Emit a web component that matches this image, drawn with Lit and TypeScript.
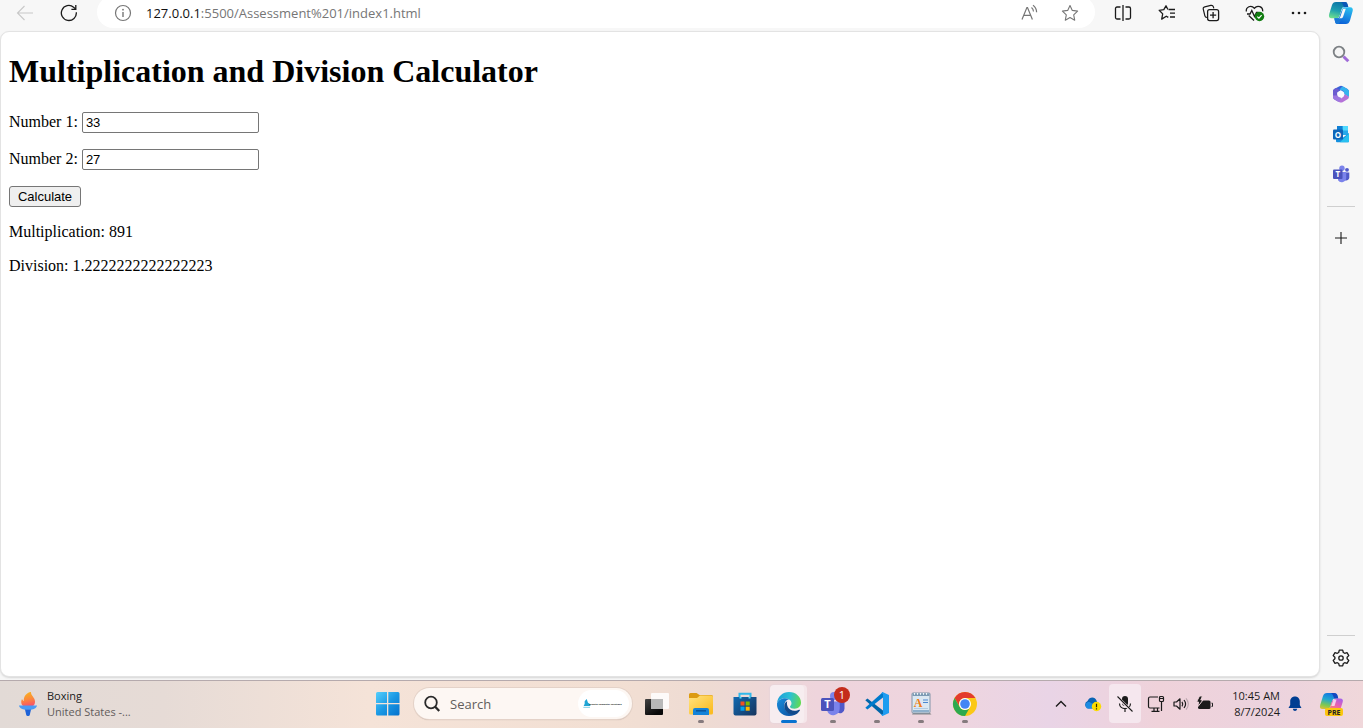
import { LitElement, html, css, svg } from "lit";
import { customElement, state } from "lit/decorators.js";

const icon = (w: number, h: number, body: unknown) =>
  html`<svg width=${w} height=${h} viewBox="0 0 ${w} ${h}" fill="none" aria-hidden="true">${body}</svg>`;

const line = "#1b1b1b";
const grey = "#767676";

const icons = {
  back: icon(18, 18, svg`<path d="M17 9H1.5M8.500 2L1.500 9l7 7" stroke="#c8c8c8" stroke-width="1.100"/>`),
  reload: icon(18, 18, svg`<path d="M16.300 8.200A7.500 7.500 0 1 1 13.600 3.200L15.600 5" stroke=${line} stroke-width="1.300"/><path d="M15.800 1v4.400h-4.400" stroke=${line} stroke-width="1.300"/>`),
  info: icon(18, 18, svg`<circle cx="9" cy="9" r="7.500" stroke=${grey} stroke-width="1.200"/><path d="M9 8v5" stroke=${grey} stroke-width="1.400"/><circle cx="9" cy="5.700" r=".9" fill=${grey}/>`),
  read: icon(18, 18, svg`<path d="M1 15.500L5.900 3.500h.6l4.900 12M2.800 11.300h6.800" stroke=${grey} stroke-width="1.200"/><path d="M10.500 3.500c1.200.9 1.900 2.200 2 4M12 1.200c2.200 1.500 3.500 3.800 3.600 7" stroke=${grey} stroke-width="1.200"/>`),
  star: icon(18, 18, svg`<path d="M9 1.500l2.300 4.900 5.300.7-3.900 3.700 1 5.400L9 13.600l-4.700 2.600 1-5.400L1.400 7.100l5.300-.7z" stroke=${grey} stroke-width="1.100" stroke-linejoin="round"/>`),
  split: icon(18, 18, svg`<path d="M6.500 3H3a1.500 1.500 0 0 0-1.500 1.500v9A1.500 1.500 0 0 0 3 15h3.500M11.500 3H15a1.500 1.500 0 0 1 1.500 1.500v9A1.500 1.500 0 0 1 15 15h-3.500M9 1v16" stroke=${line} stroke-width="1.300"/>`),
  favourites: icon(18, 18, svg`<path d="M10.600 5.500h6.400M12 9.200h5M12 13h5M10.300 13.400l-2-1.200-4.600 2.900 1-5.200L1.200 6.300l4.600-.7L8 1.800l1.900 3.700" stroke=${line} stroke-width="1.300" stroke-linejoin="round"/>`),
  collections: icon(18, 18, svg`<path d="M5 13.500c-1.500 0-2-.7-2.200-1.800L1.300 5.300c-.3-1.300.2-2.200 1.500-2.500l6-1.400c1.300-.3 2.200.2 2.600 1.500l.4 1.400" stroke=${line} stroke-width="1.200"/><rect x="5.600" y="5.600" width="11" height="11" rx="2" stroke=${line} stroke-width="1.300"/><path d="M11.100 8v6.200M8 11.100h6.200" stroke=${line} stroke-width="1.300"/>`),
  health: icon(20, 18, svg`<path d="M1.300 7.500C.8 3 6 .5 9.400 4.200 12.600.5 18 2.800 17.700 7.400M2 10h3l1.800-3.500 2.700 6 2-4h2M3.700 11.500l5.300 5" stroke=${line} stroke-width="1.300"/><circle cx="14.500" cy="12.500" r="4.700" fill="#107c10"/><path d="M12.300 12.600l1.600 1.500 2.700-2.900" stroke="#fff" stroke-width="1.200"/>`),
  more: icon(18, 18, svg`<g fill=${line}><circle cx="3" cy="9" r="1.300"/><circle cx="9" cy="9" r="1.300"/><circle cx="15" cy="9" r="1.300"/></g>`),
  copilot: icon(26, 24, svg`
    <defs><linearGradient id="ca" x1="8" y1="1" x2="4" y2="17" gradientUnits="userSpaceOnUse"><stop stop-color="#0c78a8"/><stop offset=".5" stop-color="#1e9fb0"/><stop offset="1" stop-color="#6fe08c"/></linearGradient>
    <linearGradient id="cb" x1="20" y1="6" x2="15" y2="23" gradientUnits="userSpaceOnUse"><stop stop-color="#2bc0f0"/><stop offset="1" stop-color="#0b62d8"/></linearGradient></defs>
    <path d="M8 1h9c1.500 0 2 .8 2.400 2l.9 3h-4c-1.500 0-2.200.8-2.600 2l-2 6.500C11 17 10 17.300 8 17.300H3.500C1 17.300.5 15.500 1.200 13L4 4c.7-2 1.800-3 4-3z" fill="url(#ca)"/>
    <path d="M13 1h4c1.500 0 2 .8 2.400 2l.9 3h-4L15 4c-.4-1.500-.9-2.600-2-3z" fill="#0a58b8"/>
    <path d="M17 6.300h5c2.600 0 3.300 1.800 2.600 4L22 19.500c-.8 2.500-2 3.500-4.200 3.500H9.500c-1.500 0-2-1-2.400-2.300L6.300 17.300H9c1.700 0 2.400-.7 2.900-2.300l2.300-7c.5-1.300 1.300-1.700 2.800-1.700z" fill="url(#cb)"/>
    <path d="M6.300 17.300H9c1.700 0 2.400-.7 2.900-2.300l1.300-4.200L16 9l-2.700 9c-.6 2-1.600 4-2.800 5h-1c-1.500 0-2-1-2.400-2.300z" fill="#1878d8"/>
    <path d="M15 7.800h2.800L15 16c-.4 1-1 1.300-2 1.300h-2.500c1 0 1.600-.7 2-2z" fill="#f7f7f7"/>`),
  find: icon(18, 18, svg`<path d="M11.500 11.500l4.800 4.800" stroke="#a06bd8" stroke-width="3"/><circle cx="7" cy="7" r="5.300" fill="#f5f5f5" stroke="#7c8084" stroke-width="1.800"/>`),
  m365: icon(18, 18, svg`
    <path d="M7.500 1.200Q9 .3 10.500 1.200L15.500 4Q17 5 17 6.500V11l-4-1.500L9 5 5 7.500 1 8V6Q1 4.800 2.200 4z" fill="#3a62d8"/>
    <path d="M10.500 1.200l5 2.800Q17 5 17 6.500V12l-4.500-2.500L11.500 6 7.500 4.500z" fill="#35b2ee"/>
    <path d="M1 6.200V12.300Q1 13.500 2.200 14.200L6 16.500l3-3.500-3.500-1.500-.5-4L8 5 4 3 2.200 4Q1 4.800 1 6.200z" fill="#6c5cd0"/>
    <path d="M3.500 15l4 2.200q1.500.8 3 0l5-2.900q1.500-.9 1.500-2.500L12.500 9 10 13l-3.500 2z" fill="#b572d8"/>
    <path d="M1 10.500v2Q1 13.700 2.200 14.400L7 17l2.500-4L5 10.500z" fill="#9d78e0"/>
    <circle cx="9" cy="9.200" r="3.300" fill="#fafaff"/>`),
  outlook: icon(18, 18, svg`<rect x="5" y="1" width="11" height="9" fill="#28a8ea"/><path d="M10.500 1H16v4.500h-5.500z" fill="#50d9ff"/><path d="M5 1h5.500v4.500H5z" fill="#0f7fd4"/><path d="M4 9l6.500 4L17 8v8.500a.8.800 0 0 1-.8.800H5a1 1 0 0 1-1-1z" fill="#1490df"/><path d="M17 8.200L8 17.300h8.200c.5 0 .8-.3.8-.8z" fill="#28c0f0"/><rect x="1" y="4.500" width="10" height="10" rx="1" fill="#0d64b8"/><text x="6" y="12.700" text-anchor="middle" class="mark">O</text>`),
  teams: icon(18, 18, svg`<circle cx="15" cy="4.800" r="1.900" fill="#5059c9"/><circle cx="10" cy="3.200" r="2.700" fill="#7b83eb"/><path d="M13 7.500h4.300v5a3.100 3.100 0 0 1-4.300 2.700z" fill="#5059c9"/><path d="M6 7h8.200v5.600a4.500 4.500 0 0 1-8.200 2.700z" fill="#7b83eb"/><rect x="1" y="4.500" width="9.500" height="9.500" rx="1" fill="#4b53bc"/><text x="5.700" y="12.200" text-anchor="middle" class="mark">T</text>`),
  plus: icon(18, 18, svg`<path d="M9 3v12M3 9h12" stroke=${line} stroke-width="1.100"/>`),
  gear: icon(18, 18, svg`<path d="M7.300 1.200h3.400l.6 2.300 1.400.8 2.300-.7 1.800 3-1.700 1.600v1.600l1.700 1.600-1.800 3-2.300-.7-1.400.8-.6 2.300H7.300l-.6-2.300-1.400-.8-2.300.7-1.800-3 1.700-1.600V8.200L1.200 6.600l1.800-3 2.300.7 1.400-.8z" stroke=${line} stroke-width="1.300" stroke-linejoin="round"/><circle cx="9" cy="9" r="2.200" stroke=${line} stroke-width="1.300"/>`),
  torch: icon(18, 24, svg`<defs><linearGradient id="fl" x1="8" y1="0" x2="11" y2="14" gradientUnits="userSpaceOnUse"><stop stop-color="#f9b21c"/><stop offset=".5" stop-color="#fb8a3c"/><stop offset="1" stop-color="#f8506a"/></linearGradient></defs><path d="M12 0c-.3 3.500 4 5.500 4 9.500 0 2-.7 3.500-2 4.500H4C2.300 12.500 1.500 9.500 3 7c.5 1.200 1 1.800 1.800 2C4.500 4.500 7.500.5 12 0z" fill="url(#fl)"/><path d="M0 13.500h18c-.5 3-3.500 3.700-6 4.200H6c-2.500-.5-5.500-1.200-6-4.200z" fill="#4a9bf5"/><path d="M6 17.500h6l-1.300 5.700c-.3 1-3 1-3.400 0z" fill="#1c62d8"/>`),
  windows: icon(24, 24, svg`<defs><linearGradient id="wn" x1="0" y1="0" x2="24" y2="24" gradientUnits="userSpaceOnUse"><stop stop-color="#55cffc"/><stop offset=".5" stop-color="#1a98e4"/><stop offset="1" stop-color="#0470cc"/></linearGradient></defs><path d="M1.500 0H11v11H0V1.500Q0 0 1.500 0zM12.300 0h9.700q1.500 0 1.500 1.500V11H12.300zM0 12.300h11v11.200H1.500Q0 23.500 0 22zM12.300 12.300h11.200V22q0 1.500-1.500 1.500h-9.700z" fill="url(#wn)"/>`),
  lens: icon(18, 18, svg`<circle cx="8" cy="7.500" r="5.800" stroke="#2a2a2a" stroke-width="1.800"/><path d="M12.200 11.800l4 4.200" stroke="#2a2a2a" stroke-width="2.300"/>`),
  view: icon(26, 24, svg`<defs><linearGradient id="tv" x1="0" y1="7" x2="10" y2="23" gradientUnits="userSpaceOnUse"><stop stop-color="#444"/><stop offset="1" stop-color="#090909"/></linearGradient></defs><rect x="1" y="7" width="18" height="16" rx="1" fill="url(#tv)"/><rect x="7" y="1" width="18" height="16" rx="1" fill="#fff" fill-opacity=".85"/><path d="M7 7h12v10H7z" fill="#b8b8b8"/>`),
  folder: icon(26, 24, svg`<defs><linearGradient id="fd" x1="4" y1="5" x2="18" y2="24" gradientUnits="userSpaceOnUse"><stop stop-color="#ffdf76"/><stop offset="1" stop-color="#fbbc22"/></linearGradient></defs><path d="M1 2.500Q1 1 2.500 1h6L11.500 3H23.500Q25 3 25 4.500V10H1z" fill="#dc9b12"/><path d="M1 6h8l3-2.500h11.500Q25 3.500 25 5v16q0 1.500-1.500 1.500h-21Q1 22.500 1 21z" fill="url(#fd)"/><path d="M5 23v-5q0-2 2-2h12q2 0 2 2v5z" fill="#1583d8"/><path d="M8 18.800h10" stroke="#0a559c" stroke-width="1.500"/>`),
  store: icon(24, 24, svg`<defs><linearGradient id="st" x1="3" y1="5" x2="22" y2="23" gradientUnits="userSpaceOnUse"><stop stop-color="#1166ac"/><stop offset="1" stop-color="#173761"/></linearGradient></defs><path d="M6.500 7V1.800h11V7" stroke="#30b8ea" stroke-width="2"/><path d="M.5 5h23v16.500q0 2-2 2h-19q-2 0-2-2z" fill="url(#st)"/><path d="M6.500 5h2v1.500h-2zM15.500 5h2v1.500h-2z" fill="#55ddf8"/><path d="M7.500 9.500h4v4h-4z" fill="#f25022"/><path d="M12.700 9.500h4v4h-4z" fill="#7fba00"/><path d="M7.500 14.700h4v4h-4z" fill="#00a4ef"/><path d="M12.700 14.700h4v4h-4z" fill="#ffb900"/>`),
  edge: icon(26, 26, svg`
    <defs><linearGradient id="ea" x1="2" y1="5" x2="25" y2="10" gradientUnits="userSpaceOnUse"><stop stop-color="#1fa0d8"/><stop offset=".5" stop-color="#2cc0d4"/><stop offset="1" stop-color="#61da50"/></linearGradient>
    <linearGradient id="eb" x1="2" y1="10" x2="18" y2="25" gradientUnits="userSpaceOnUse"><stop stop-color="#1787d6"/><stop offset="1" stop-color="#0c4f9e"/></linearGradient></defs>
    <path d="M1 12.500C1.500 5.500 6.700 1 13 1c7 0 12 5 12 10.500 0 4-3 6.200-6.300 6.200-3 0-4.700-1-4.700-2 0-.8 1.500-1.300 1.500-3.400C15.500 9.500 12.800 7.200 9 7.200c-4.500 0-7 2.500-8 5.300z" fill="url(#ea)"/>
    <path d="M1 12.500c1-3 4-5.300 8-5.300 1.500 0 2.800.3 4 1-3 .6-4.700 3.300-4.700 6.300C8.300 19 12 23 17 23c1.500 0 3.500-.5 5.500-1.700C20.300 23.800 17 25 13 25 5.500 25 .6 19 1 12.500z" fill="url(#eb)"/>
    <path d="M11.200 10.200C10 14 12.500 19.700 18.500 19.700c2 0 3.500-.6 4.700-1 .6-.2 1 .3.500 1C22 22.500 19.300 23.500 17 23.500c-6 0-9-5-8.700-8.800.1-2 1.300-3.700 2.900-4.500z" fill="#114a8b"/>`),
  teamsBig: icon(26, 26, svg`<circle cx="21" cy="7" r="2.800" fill="#5059c9"/><circle cx="14" cy="5" r="4" fill="#7b83eb"/><path d="M17 10.500h7.500v7.300a4.500 4.500 0 0 1-7 3.700z" fill="#5059c9"/><path d="M7.500 10.500h12.200v7.300a6.500 6.500 0 0 1-12.200 3z" fill="#7b83eb"/><rect x="1" y="7" width="13" height="13" rx="1.500" fill="#4b53bc"/><text x="7.500" y="17.300" text-anchor="middle" class="mark big">T</text>`),
  code: icon(26, 26, svg`<path d="M1.300 9.300L3.400 7.600 19 19.500V25L1.300 9.300z" fill="#0065a9"/><path d="M1.300 16.800l2.100 1.600L19 6.500V1L1.300 16.800z" fill="#007acc"/><path d="M18.500 1L25 4v18l-6.500 3-1.500-1.500 2-.5V3l-2-.5z" fill="#1f9cf0"/>`),
  notes: icon(22, 24, svg`<path d="M3 21l17 0 1.500 1.500H2z" fill="#888"/><rect x="2" y="1" width="18" height="20" rx="1" fill="#dbe7f2" stroke="#8194a8" stroke-width="1"/><path d="M2.500 1.500h17v2.500h-17z" fill="#7d9ab4"/><path d="M4.500 1v1.800M7.500 1v1.800M10.500 1v1.800M13.500 1v1.800M16.500 1v1.800" stroke="#f3f6f8" stroke-width="1"/><path d="M13 8h5M13 10.500h5" stroke="#4c87d0" stroke-width="1"/><path d="M4 16.500h14" stroke="#b4cbe0" stroke-width="1"/><path d="M3 19h16" stroke="#8fb0cc" stroke-width="2"/><text x="8" y="14.500" text-anchor="middle" class="letter">A</text>`),
  chrome: icon(26, 26, svg`<circle cx="13" cy="13" r="12" fill="#fbc816"/><path d="M2.600 7A12 12 0 0 1 23.400 7H13a6 6 0 0 0-5.400 8.500z" fill="#e33b2e"/><path d="M2.600 7A12 12 0 0 0 13 25l5.300-9.200A6 6 0 0 1 7.700 16z" fill="#2da94f"/><circle cx="13" cy="13" r="6" fill="#fff"/><circle cx="13" cy="13" r="4.800" fill="#4285f4"/>`),
  chevron: icon(12, 12, svg`<path d="M1 8.500l5-5 5 5" stroke=${line} stroke-width="1.400"/>`),
  cloud: icon(18, 16, svg`<path d="M4 12.500a4 4 0 0 1-.5-7.500C5.500.5 11 .5 12.500 4.500L14 8l-3 4.500z" fill="#0a64b4"/><path d="M2 11c-1.500-3 .7-5.500 3.500-5L12 10l-1 2.500H4c-1 0-1.500-.5-2-1.500z" fill="#1c8be2"/><circle cx="12.500" cy="10.500" r="4.700" fill="#fbdc00"/><path d="M12.500 7.800v3.500M12.500 12.300v1.200" stroke="#322d00" stroke-width="1.200"/>`),
  mic: icon(18, 18, svg`<rect x="6" y="1" width="6" height="10" rx="3" fill="#1b1b1b"/><path d="M3.500 8.500c0 6.700 11 6.700 11 0M9 13.500V17" stroke=${line} stroke-width="1.200"/><path d="M1.500 2L16 16.500" stroke="#f5e7ee" stroke-width="2.600"/><path d="M1.500 1.500L16.500 16.500" stroke=${line} stroke-width="1.100"/>`),
  monitor: icon(18, 18, svg`<path d="M11 2H3A1.500 1.500 0 0 0 1.500 3.500v8A1.500 1.500 0 0 0 3 13h9.500M4.500 16.300h8M7 13v3M10.500 13v3" stroke=${line} stroke-width="1.200"/><rect x="12.500" y="1.500" width="4" height="5" rx="1" stroke=${line} stroke-width="1.200"/><path d="M12.500 3.500h4M14.500 6.500v9.500" stroke=${line} stroke-width="1.200"/>`),
  sound: icon(16, 16, svg`<path d="M1 6h2.500L7 2.800v10.400L3.500 10H1z" stroke=${line} stroke-width="1.200" stroke-linejoin="round"/><path d="M9 5.800c1 1.500 1 3 0 4.500M11 4c2 2.500 2 5.500 0 8" stroke=${line} stroke-width="1.200"/><path d="M13 2.300c3 3.500 3 8 0 11.400" stroke="#b9a5ad" stroke-width="1.200"/>`),
  battery: icon(17, 16, svg`<path d="M3 4.500h10q1.500 0 1.500 1.500v5.500q0 1.500-1.500 1.500H3.500Q2 13 2 11.500V6Q2 4.500 3 4.500z" fill="#1b1b1b"/><path d="M15.500 7.200h1v3.200h-1" stroke=${line}/><path d="M3.500 0L.5 6h2L2 10.500 7 4H4.800L6.500 0z" fill="#1b1b1b" stroke="#efd5dc" stroke-width="1"/>`),
  bell: icon(14, 16, svg`<path d="M7 .5c3 0 4.800 2.200 4.800 4.800V9l1.700 3H.5l1.700-3V5.300C2.200 2.700 4 .5 7 .5z" fill="#003e92"/><path d="M4.800 12.800h4.400C8.700 15.800 5.300 15.800 4.800 12.800z" fill="#003e92"/>`),
  copilotPre: icon(26, 24, svg`
    <defs><linearGradient id="pa" x1="8" y1="1" x2="4" y2="18" gradientUnits="userSpaceOnUse"><stop stop-color="#147be0"/><stop offset=".35" stop-color="#22a8d0"/><stop offset=".7" stop-color="#80c850"/><stop offset="1" stop-color="#f0c030"/></linearGradient>
    <linearGradient id="pb" x1="22" y1="6" x2="14" y2="20" gradientUnits="userSpaceOnUse"><stop stop-color="#a060f0"/><stop offset=".5" stop-color="#e860b0"/><stop offset="1" stop-color="#ff9060"/></linearGradient></defs>
    <path d="M8 1h7c2 0 3 .8 3.600 3l.7 2.500H16c-1.500 0-2.200.8-2.600 2L11.500 14c-.6 2-1.500 3-3.500 3H3.500C1 17 .5 15.500 1.200 13L4 4c.7-2 1.800-3 4-3z" fill="url(#pa)"/>
    <path d="M11 1h4c2 0 3 .8 3.600 3l.7 2.500h-4L14 3.500C13.500 2 12.500 1 11 1z" fill="#1448c0"/>
    <path d="M17 6.500h4c2.600 0 3.300 1.500 2.700 3.500L21.500 17H8.200c1.700 0 2.500-.8 3-2.300l2-6z" fill="url(#pb)"/>
    <path d="M14.500 7.500h3L15.500 14h-3.300z" fill="#fff" fill-opacity=".7"/>
    <rect x="6" y="16" width="18" height="8" rx="2" fill="#fcc60e"/><text x="15" y="22.500" text-anchor="middle" class="pre">PRE</text>`),
  sponsor: html`<svg width="44" height="12" viewBox="0 0 132 36" fill="none" aria-hidden="true"><path d="M8 10l6-7 4 11 7 5v5H5l3-7z" fill="#1fa5d5"/><path d="M4 28h20" stroke="#48b8d8" stroke-width="2"/><text x="22" y="22" class="tiny">Infinite Computer Solutions</text></svg>`,
};

@customElement("app-root")
export class AppRoot extends LitElement {
  @state() private first = "33";
  @state() private second = "27";
  @state() private product = 891;
  @state() private quotient = 33 / 27;

  static styles = css`
    :host {
      display: grid;
      grid-template-columns: minmax(0, 1fr) 43px;
      grid-template-rows: 31px minmax(0, 1fr) 48px;
      min-height: 100vh;
      background: #f7f7f7;
      color: #1b1b1b;
      font-family: "Open Sans", sans-serif;
    }
    * { box-sizing: border-box; }
    svg { display: block; flex: none; }
    .mark { font: bold 8px "Open Sans", sans-serif; fill: #fff; }
    .big { font-size: 11px; }
    .letter { font: bold 12px "Liberation Serif", serif; fill: #f07d16; }
    .pre { font: bold 7px "Open Sans", sans-serif; fill: #222; }
    .tiny { font: bold 7px "Open Sans", sans-serif; fill: #222; }
    .icon-button {
      display: flex;
      align-items: center;
      justify-content: center;
      border: 0;
      padding: 0;
      background: none;
    }
    .toolbar {
      display: flex;
      height: 26px;
      padding-left: 3px;
      margin-right: -1px;
    }
    .toolbar > .icon-button { width: 44px; height: 26px; flex: none; }
    .address {
      flex: 1;
      display: flex;
      align-items: center;
      height: 32px;
      margin: -4px 6px 0 6px;
      padding: 2px 16px 0 17px;
      border-radius: 16px;
      background: #fff;
    }
    .url {
      flex: 1;
      margin-left: 14px;
      font-size: 13px;
      line-height: 20px;
      color: #767676;
      white-space: nowrap;
    }
    .url b { font-weight: 400; color: #111; }
    .tools { display: flex; gap: 22px; }
    .page {
      grid-row: 2;
      margin-bottom: 3px;
      padding: 21px 8px;
      border: 1px solid #e3e3e3;
      border-radius: 9px;
      background: #fff;
      box-shadow: 0 1px 2px #d6d6d6;
      font: 16px/18px "Liberation Serif", serif;
      color: #000;
    }
    h1 { margin: 0 0 22px; font-size: 32px; line-height: 37px; }
    .row { margin-bottom: 16px; height: 21px; }
    .row input {
      width: 177px;
      height: 21px;
      padding: 1px 3px;
      border: 1px solid #767676;
      border-radius: 2px;
      font: 13px "Liberation Sans", sans-serif;
      color: #000;
    }
    .calculate {
      display: block;
      width: 72px;
      height: 21px;
      padding: 0;
      border: 1px solid #767676;
      border-radius: 3px;
      background: #efefef;
      font: 13px "Liberation Sans", sans-serif;
      color: #000;
    }
    .page p { margin: 16px 0 0; }
    .sidebar {
      grid-column: 2;
      grid-row: 1 / 3;
      display: flex;
      flex-direction: column;
      align-items: center;
      padding-right: 1px;
    }
    .sidebar .icon-button { width: 40px; height: 40px; flex: none; }
    .sidebar .lead { height: 26px; margin-bottom: 8px; }
    .rule { width: 28px; height: 1px; margin: 12px 0 11px; background: #cfcfcf; }
    .sidebar .rule.low { margin: auto 0 2px; }
    .sidebar .end { margin-bottom: 2px; }
    .taskbar {
      grid-column: 1 / 3;
      display: grid;
      grid-template-columns: 1fr auto 1fr;
      padding-bottom: 2px;
      border-top: 1px solid #b5aaad;
      background: linear-gradient(90deg, #e2dad6, #e6dbd6 12%, #f5e3d8 27%, #f2dfd3 45%, #eedbd3 52%, #eed4dc 60%, #eed5df 70%, #e9d4e6 77%, #efd2da 85%, #ecd3de 93%, #f0d7da);
    }
    .news {
      display: flex;
      align-items: center;
      gap: 10px;
      padding: 0 0 0 19px;
      border: 0;
      background: none;
      justify-self: start;
      text-align: left;
      font: 11px/16px "Open Sans", sans-serif;
      color: #1b1b1b;
    }
    .news span { display: block; }
    .news .sub { color: #625c5b; }
    .apps { display: flex; align-items: center; padding-right: 8px; }
    .start { width: 40px; height: 44px; }
    .search {
      display: flex;
      align-items: center;
      width: 218px;
      height: 31px;
      margin: 0 3px 0 6px;
      padding: 0 3px 0 9px;
      border-radius: 16px;
      background: #fdf7f3;
      box-shadow: 0 0 0 1px #e4d2c8, 0 1px 1px #b7a8a0;
    }
    .search input {
      flex: 1;
      min-width: 0;
      margin-left: 9px;
      padding: 0;
      border: 0;
      outline: 0;
      background: none;
      font: 13px "Open Sans", sans-serif;
    }
    .search input::placeholder { color: #625e5c; opacity: 1; }
    .sponsor {
      display: flex;
      align-items: center;
      justify-content: center;
      width: 51px;
      height: 27px;
      border-radius: 14px;
      background: #fff;
    }
    .app {
      position: relative;
      width: 44px;
      height: 45px;
    }
    .app.running::after {
      content: "";
      position: absolute;
      left: 19px;
      bottom: 3px;
      width: 6px;
      height: 3px;
      border-radius: 2px;
      background: #857b7e;
    }
    .app.active::after { left: 14px; width: 16px; background: #0872d0; }
    .app.active::before {
      content: "";
      position: absolute;
      inset: 4px 7px 3px 3px;
      border-radius: 4px;
      background: #f7edf0;
      box-shadow: 3px 0 0 #f5e6ea, 0 0 1px 1px #e8d5da;
    }
    .app svg { position: relative; }
    .badge {
      position: absolute;
      top: 6px;
      left: 23px;
      width: 16px;
      height: 16px;
      border-radius: 8px;
      background: #c42b1c;
      color: #fff;
      font: 11px/16px "Open Sans", sans-serif;
      text-align: center;
    }
    .tray {
      justify-self: end;
      display: flex;
      align-items: center;
      padding-right: 18px;
    }
    .tray .icon-button { height: 39px; }
    .tray .w32 { width: 32px; }
    .tray .w30 { width: 30px; }
    .tray .w20 { width: 20px; }
    .tray .w26 { width: 26px; }
    .tray .muted { border-radius: 4px; background: #f5e7ee; }
    .clock {
      width: 60px;
      padding: 0;
      border: 0;
      background: none;
      margin-left: 3px;
      text-align: right;
      white-space: nowrap;
      font: 11px/16px "Open Sans", sans-serif;
      color: #1b1b1b;
    }
    .clock span { display: block; }
    .tray .bell { width: 30px; }
    .tray .pre-button { width: 26px; margin-left: 9px; }
  `;

  private calculate() {
    this.product = Number(this.first) * Number(this.second);
    this.quotient = Number(this.first) / Number(this.second);
  }

  private button(label: string, glyph: unknown, extra = "", inner: unknown = "") {
    return html`<button class="icon-button ${extra}" aria-label=${label}>${glyph}${inner}</button>`;
  }

  render() {
    const b = this.button;
    return html`
      <header class="toolbar">
        ${b("Back", icons.back)}${b("Refresh", icons.reload)}
        <div class="address">
          ${icons.info}
          <span class="url"><b>127.0.0.1</b>:5500/Assessment%201/index1.html</span>
          <div class="tools">${b("Read aloud", icons.read)}${b("Add to favorites", icons.star)}</div>
        </div>
        ${b("Split screen", icons.split)}${b("Favorites", icons.favourites)}${b("Collections", icons.collections)}${b("Browser essentials", icons.health)}${b("Settings and more", icons.more)}
      </header>
      <nav class="sidebar">
        ${b("Copilot", icons.copilot, "lead")}${b("Search", icons.find)}${b("Microsoft 365", icons.m365)}${b("Outlook", icons.outlook)}${b("Teams", icons.teams)}
        <div class="rule"></div>
        ${b("Customize", icons.plus)}
        <div class="rule low"></div>
        ${b("Settings", icons.gear, "end")}
      </nav>
      <main class="page">
        <h1>Multiplication and Division Calculator</h1>
        <div class="row">
          <label for="n1">Number 1:</label>
          <input id="n1" .value=${this.first} @input=${(e: Event) => (this.first = (e.target as HTMLInputElement).value)} />
        </div>
        <div class="row">
          <label for="n2">Number 2:</label>
          <input id="n2" .value=${this.second} @input=${(e: Event) => (this.second = (e.target as HTMLInputElement).value)} />
        </div>
        <button class="calculate" @click=${this.calculate}>Calculate</button>
        <p>Multiplication: ${this.product}</p>
        <p>Division: ${this.quotient}</p>
      </main>
      <footer class="taskbar">
        <button class="news">${icons.torch}<span><span>Boxing</span><span class="sub">United States -...</span></span></button>
        <div class="apps">
          ${b("Start", icons.windows, "start")}
          <div class="search">${icons.lens}<input aria-label="Search" placeholder="Search" /><span class="sponsor">${icons.sponsor}</span></div>
          ${b("Task view", icons.view, "app")}
          ${b("File Explorer", icons.folder, "app running")}
          ${b("Microsoft Store", icons.store, "app")}
          ${b("Edge", icons.edge, "app running active")}
          ${b("Teams", icons.teamsBig, "app running", html`<span class="badge">1</span>`)}
          ${b("Visual Studio Code", icons.code, "app running")}
          ${b("WordPad", icons.notes, "app running")}
          ${b("Chrome", icons.chrome, "app running")}
        </div>
        <div class="tray">
          ${b("Show hidden icons", icons.chevron, "w32")}${b("OneDrive", icons.cloud, "w32")}${b("Microphone muted", icons.mic, "w32 muted")}
          ${b("Network", icons.monitor, "w30")}${b("Volume", icons.sound, "w20")}${b("Battery", icons.battery, "w26")}
          <button class="clock"><span>10:45 AM</span><span>8/7/2024</span></button>
          ${b("Notifications", icons.bell, "bell")}${b("Copilot preview", icons.copilotPre, "pre-button")}
        </div>
      </footer>
    `;
  }
}
